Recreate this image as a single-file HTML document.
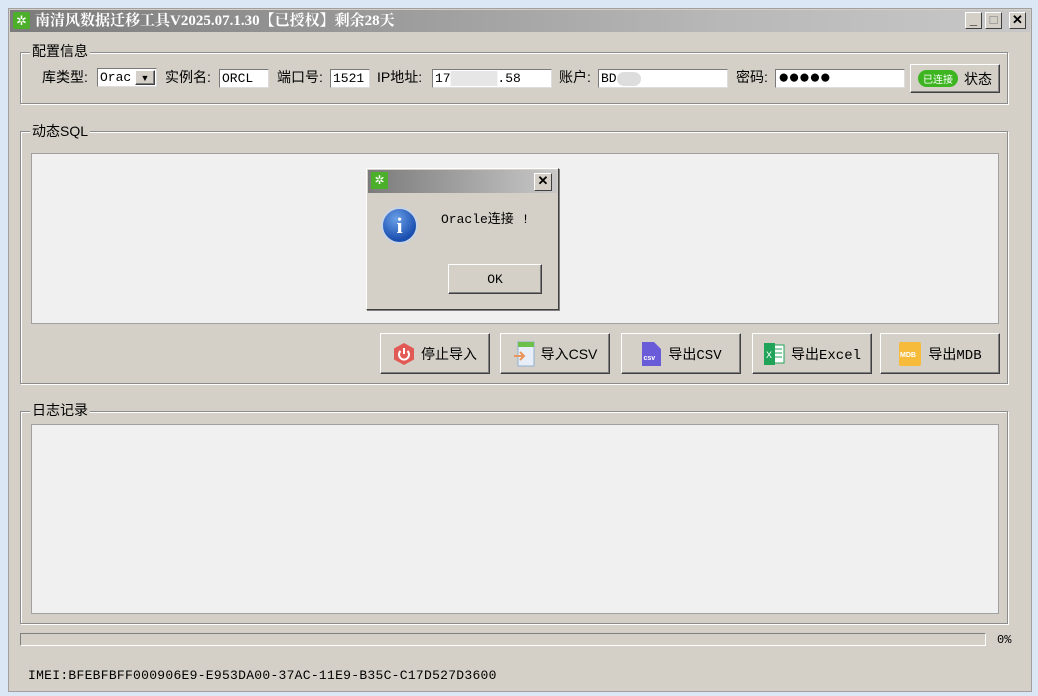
<!DOCTYPE html>
<html><head><meta charset="utf-8"><style>
*{margin:0;padding:0;box-sizing:border-box}
body{width:1038px;height:696px;background:#dbe7f4;position:relative;overflow:hidden;font-family:"Liberation Sans","Noto Sans CJK SC",sans-serif;font-size:14px;color:#000}
.a{position:absolute}
.win{left:8px;top:8px;width:1024px;height:684px;background:#d4d0c8;border:1px solid #a0a0a0}
.title{left:10px;top:10px;width:1020px;height:22px;background:linear-gradient(90deg,#7b7b7b,#b8b8b8 70%,#c8c8c8)}
.grp{border:1px solid #8c8c8c;box-shadow:1px 1px 0 #fff inset,1px 1px 0 #fff}
.leg{background:#d4d0c8;padding:0 2px;font-size:14px;line-height:16px}
.inp{background:#fff;border:1px solid #7a7a7a;border-right-color:#ddd;border-bottom-color:#ddd;height:19px;font-family:"Liberation Mono","Noto Sans CJK SC",monospace;font-size:13px;line-height:17px;padding-left:2px}
.lbl{font-size:14px;line-height:18px}
.ta{background:#f0f0f0;border:1px solid #a0a0a0}
.btn{background:#d4d0c8;border:1px solid;border-color:#fff #404040 #404040 #fff;box-shadow:inset -1px -1px 0 #808080;display:flex;align-items:center;justify-content:center;font-size:14px;gap:6px}
.mono{font-family:"Liberation Mono","Noto Sans CJK SC",monospace}
.tb{width:17px;height:17px;top:12px;background:#d4d0c8;border:1px solid;border-color:#fff #404040 #404040 #fff;font-size:13px;font-weight:bold;text-align:center;line-height:14px}
</style></head><body>
<div class="a win"></div>
<div class="a title"></div>
<div class="a" style="left:13px;top:12px;width:17px;height:17px;background:#4caf2a;border-radius:2px;color:#fff;font-size:13px;line-height:17px;text-align:center">✲</div>
<div class="a" style="left:35px;top:11px;color:#fff;font-weight:bold;font-size:15px;line-height:20px;font-family:'Liberation Serif','Noto Serif CJK SC',serif">南清风数据迁移工具V2025.07.1.30【已授权】剩余28天</div>
<div class="a tb" style="left:965px">_</div>
<div class="a tb" style="left:985px;color:#777">□</div>
<div class="a tb" style="left:1009px">✕</div>

<div class="a grp" style="left:20px;top:52px;width:988px;height:52px"></div>
<div class="a leg" style="left:30px;top:43px">配置信息</div>
<div class="a lbl" style="left:42px;top:68px">库类型:</div>
<div class="a inp" style="left:97px;top:68px;width:60px">Orac</div>
<div class="a btn" style="left:135px;top:70px;width:20px;height:15px;font-size:9px">▼</div>
<div class="a lbl" style="left:165px;top:68px">实例名:</div>
<div class="a inp" style="left:219px;top:69px;width:50px">ORCL</div>
<div class="a lbl" style="left:277px;top:68px">端口号:</div>
<div class="a inp" style="left:330px;top:69px;width:40px">1521</div>
<div class="a lbl" style="left:377px;top:68px">IP地址:</div>
<div class="a inp" style="left:432px;top:69px;width:120px">17<span style="color:#e6e6e6;background:#e6e6e6">██████</span>.58</div>
<div class="a lbl" style="left:559px;top:68px">账户:</div>
<div class="a inp" style="left:598px;top:69px;width:130px">BD<span style="display:inline-block;width:24px;height:14px;background:#ddd;border-radius:8px;vertical-align:middle"></span></div>
<div class="a lbl" style="left:736px;top:68px">密码:</div>
<div class="a inp" style="left:775px;top:69px;width:130px;font-size:19px;line-height:16px;letter-spacing:-1px">●●●●●</div>
<div class="a btn" style="left:910px;top:64px;width:90px;height:29px"><span style="background:#3cb521;color:#fff;font-size:10px;border-radius:9px;padding:1px 5px">已连接</span>状态</div>

<div class="a grp" style="left:20px;top:131px;width:988px;height:253px"></div>
<div class="a leg" style="left:30px;top:123px">动态SQL</div>
<div class="a ta" style="left:31px;top:153px;width:968px;height:171px"></div>
<div class="a btn" style="left:380px;top:333px;width:110px;height:41px"><svg width="22" height="24" viewBox="0 0 22 24"><polygon points="11,1 21,6.5 21,17.5 11,23 1,17.5 1,6.5" fill="#e25a55"/><path d="M7.5 9a5 5 0 1 0 7 0M11 6v6" stroke="#fff" stroke-width="2" fill="none"/></svg>停止导入</div>
<div class="a btn" style="left:500px;top:333px;width:110px;height:41px"><svg width="22" height="26" viewBox="0 0 22 26"><rect x="5" y="1" width="16" height="24" fill="#e8eef7" stroke="#8fb0d0"/><rect x="5" y="1" width="16" height="5" fill="#6cc04a"/><path d="M1 15h9M7 11l4 4-4 4" stroke="#e8945a" stroke-width="2" fill="none"/></svg>导入CSV</div>
<div class="a btn" style="left:621px;top:333px;width:120px;height:41px"><svg width="22" height="26" viewBox="0 0 22 26"><path d="M2 1h12l7 7v17H2z" fill="#6a5bd8"/><text x="3.5" y="19" font-size="7" fill="#fff" font-family="Liberation Sans" font-weight="bold">csv</text></svg><span class="mono">导出CSV</span></div>
<div class="a btn" style="left:752px;top:333px;width:120px;height:41px"><svg width="22" height="24" viewBox="0 0 22 24"><rect x="8" y="3" width="13" height="18" fill="#fff" stroke="#21a45a"/><path d="M11 7h8M11 11h8M11 15h8" stroke="#21a45a"/><rect x="1" y="1" width="11" height="22" fill="#21a45a"/><text x="3" y="16" font-size="9" fill="#fff" font-family="Liberation Sans">X</text></svg><span class="mono">导出Excel</span></div>
<div class="a btn" style="left:880px;top:333px;width:120px;height:41px"><svg width="24" height="26" viewBox="0 0 24 26"><rect x="1" y="1" width="22" height="24" rx="2" fill="#f7bb3c"/><text x="2" y="16" font-size="7" fill="#fff" font-family="Liberation Sans" font-weight="bold">MDB</text></svg><span class="mono">导出MDB</span></div>

<div class="a grp" style="left:20px;top:411px;width:988px;height:213px"></div>
<div class="a leg" style="left:30px;top:402px">日志记录</div>
<div class="a ta" style="left:31px;top:424px;width:968px;height:190px"></div>

<div class="a" style="left:20px;top:633px;width:966px;height:13px;border:1px solid;border-color:#808080 #fff #fff #808080"></div>
<div class="a mono" style="left:997px;top:633px;font-size:12px">0%</div>
<div class="a mono" style="left:28px;top:668px;font-size:13px;letter-spacing:0.28px">IMEI:BFEBFBFF000906E9-E953DA00-37AC-11E9-B35C-C17D527D3600</div>

<div class="a" style="left:366px;top:168px;width:193px;height:142px;background:#d4d0c8;border:1px solid;border-color:#fff #404040 #404040 #fff;box-shadow:1px 1px 0 #808080"></div>
<div class="a" style="left:368px;top:170px;width:189px;height:23px;background:linear-gradient(90deg,#7b7b7b,#c8c8c8)"></div>
<div class="a" style="left:371px;top:172px;width:17px;height:17px;background:#4caf2a;color:#fff;font-size:12px;line-height:17px;text-align:center">✲</div>
<div class="a tb" style="left:534px;top:173px;width:18px;height:18px">✕</div>
<div class="a" style="left:381px;top:207px;width:37px;height:37px;border-radius:50%;background:radial-gradient(circle at 40% 30%,#6a9fe8,#1a4fb0 70%);border:2px solid #c8d4e4;color:#fff;font:bold 22px 'Liberation Serif',serif;text-align:center;line-height:33px">i</div>
<div class="a mono" style="left:441px;top:208px;font-size:13px">Oracle连接 !</div>
<div class="a btn" style="left:448px;top:264px;width:94px;height:30px"><span class="mono" style="font-size:13px">OK</span></div>
</body></html>
